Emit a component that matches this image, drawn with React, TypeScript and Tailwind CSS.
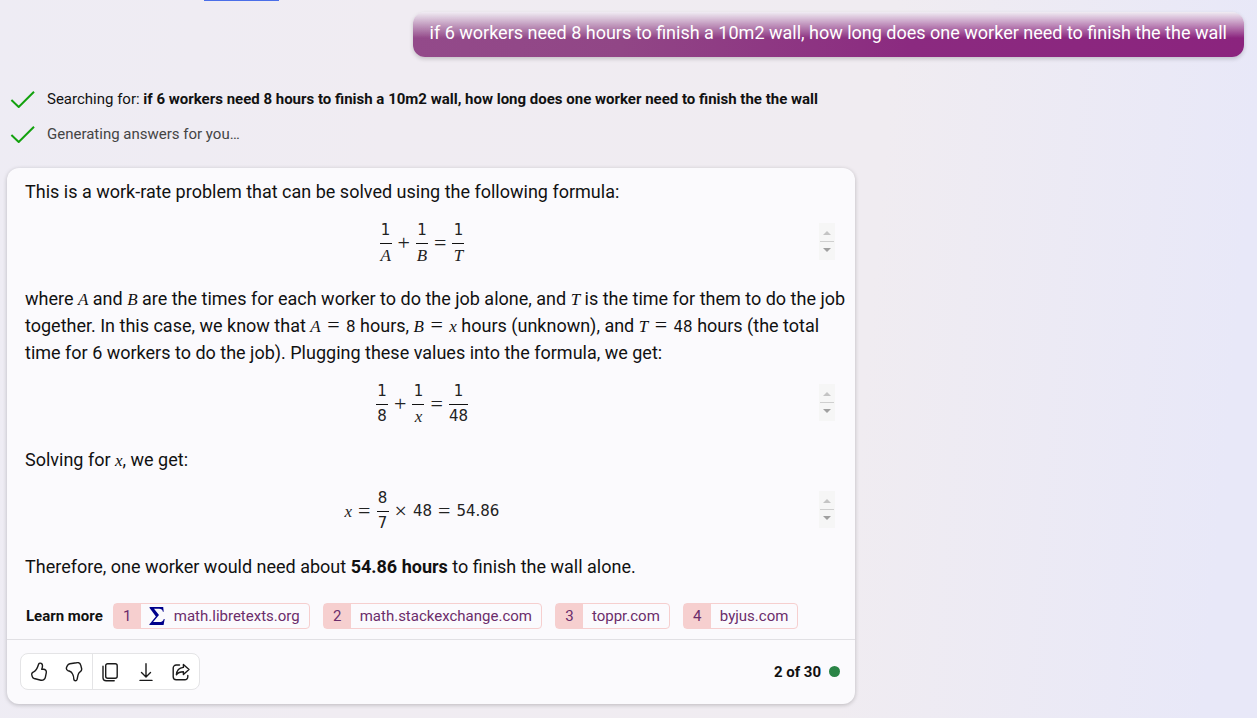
import { useState } from "react"
import type { ReactNode } from "react"

interface Source {
  host: string
  sigma?: boolean
}

const question =
  "if 6 workers need 8 hours to finish a 10m2 wall, how long does one worker need to finish the the wall"

const sources: Source[] = [
  { host: "math.libretexts.org", sigma: true },
  { host: "math.stackexchange.com" },
  { host: "toppr.com" },
  { host: "byjus.com" },
]

function Var({ children }: { children: ReactNode }) {
  return <i className="font-['Liberation_Serif',serif] text-[17px] leading-none">{children}</i>
}

function Num({ children }: { children: ReactNode }) {
  return <span className="font-['DejaVu_Sans',sans-serif] text-[15px] leading-none">{children}</span>
}

function Op({ children }: { children: ReactNode }) {
  return <span className="px-[2px] font-['Liberation_Serif',serif] text-[22px] leading-none">{children}</span>
}

function Frac({ top, bottom }: { top: ReactNode; bottom: ReactNode }) {
  return (
    <span className="inline-flex flex-col items-center">
      <span className="flex h-6 items-center">{top}</span>
      <span className="h-px w-full bg-[#111]" />
      <span className="flex h-6 min-w-3 items-center justify-center">{bottom}</span>
    </span>
  )
}

// Display formula with its small vertical scroller
function Formula({ children }: { children: ReactNode }) {
  return (
    <div className="mt-[18px] mb-[25px] flex h-[37px] items-center">
      <div className="flex flex-1 items-center justify-center gap-1 pt-[3px] text-[#222]">{children}</div>
      <div className="flex h-full w-4 flex-col bg-[#f6f6f6]">
        <button aria-label="Scroll up" className="flex flex-1 items-center justify-center pt-[2px]">
          <svg width="8" height="4" viewBox="0 0 8 4" fill="#c4c4c4">
            <path d="M4 0l4 4H0z" />
          </svg>
        </button>
        <span className="mx-[1px] h-px bg-[#cfcfcf]" />
        <button aria-label="Scroll down" className="flex flex-1 items-center justify-center pb-[2px]">
          <svg width="8" height="4" viewBox="0 0 8 4" fill="#a0a0a0">
            <path d="M4 4L0 0h8z" />
          </svg>
        </button>
      </div>
    </div>
  )
}

function StatusRow({ children }: { children: ReactNode }) {
  return (
    <li className="flex h-[35px] items-center gap-3 pl-[3px]">
      <svg width="25" height="18" viewBox="0 0 25 18" fill="none" stroke="#13a10e" strokeWidth="2">
        <path d="M1.400 10l7.300 7L24 1.700" />
      </svg>
      <p>{children}</p>
    </li>
  )
}

function Icon({ children }: { children: ReactNode }) {
  return (
    <svg
      width="20"
      height="20"
      viewBox="0 0 20 20"
      fill="none"
      stroke="#1a1a1a"
      strokeWidth="1.4"
      strokeLinecap="round"
      strokeLinejoin="round"
    >
      {children}
    </svg>
  )
}

function Toolbar() {
  const [vote, setVote] = useState<"up" | "down" | null>(null)
  const btn = "flex h-full flex-1 items-center justify-center"

  return (
    <div className="flex h-[37px] w-[180px] rounded-lg border border-[#e4e4e6] bg-white">
      <button className={btn} aria-label="Like" aria-pressed={vote === "up"} onClick={() => setVote("up")}>
        <Icon>
          <path d="M10.6 1.2c1.6-.5 2.9.8 2.9 2.6 0 1.2-.3 2.3-.8 3.5h1.8c1.9 0 3.1 1.5 2.8 3.3l-.9 4.6c-.4 2.1-2.4 3.5-4.5 3l-6.7-1.7c-1-.3-1.800-1-2-2.100l-.4-1.500c-.3-1.300.3-2.300 1.500-2.800C6.800 9.200 8.300 6.400 9.600 2.200c.2-.6.5-.9 1-1z" />
        </Icon>
      </button>
      <button
        className={`${btn} border-r border-[#e4e4e6]`}
        aria-label="Dislike"
        aria-pressed={vote === "down"}
        onClick={() => setVote("down")}
      >
        <Icon>
          <path d="M3.400 3.600c.6-1 1.400-1.500 2.500-1.800l6.600-1.100c2-.4 3.800.7 4.300 2.700l.8 3.100c.3 1.400-.2 2.500-1.300 3.200-1.300.9-2 2.100-2.300 3.500l-.9 4.200c-.2.9-.8 1.400-1.600 1.400-1 0-1.600-.7-1.700-1.700 0-1.900-.4-3.500-1.200-5.100-.7-1.500-1.800-2.400-3.400-3L4 8.700c-1.300-.6-1.900-2-1.400-3.400z" />
        </Icon>
      </button>
      <button className={btn} aria-label="Copy">
        <Icon>
          <rect x="4.700" y="1.700" width="11.500" height="14.600" rx="2" />
          <path d="M2 4.300v11.200A3.200 3.200 0 0 0 5.200 18.700h8" />
        </Icon>
      </button>
      <button className={btn} aria-label="Export">
        <Icon>
          <path d="M10 1.800v13M5.500 10.500l4.500 4.400 4.500-4.400M4 18.400h12" />
        </Icon>
      </button>
      <button className={btn} aria-label="Share">
        <Icon>
          <path d="M8.500 3H5.200A3 3 0 0 0 2.200 6v8.800a3 3 0 0 0 3 3h8.600a3 3 0 0 0 3-3v-1.300" />
          <path d="M12.400 2.500l5.600 5-5.600 5V9.800c-3.200 0-5.400.8-7 3 .3-4 2.800-7 7-7.400z" />
        </Icon>
      </button>
    </div>
  )
}

export default function App() {
  return (
    <main className="min-h-screen bg-[linear-gradient(95deg,#eeecf4_0%,#f0ecf2_30%,#f0ecf1_68%,#e8e8f8_96%)] pr-[13px] pb-[14px] pl-[7px] font-[Roboto,sans-serif] text-[#111]">
      <div className="h-3 pl-[197px]">
        <div className="h-px w-[75px] bg-[#4a6ee8]" />
      </div>

      <div className="flex justify-end">
        <p className="rounded-xl bg-[linear-gradient(180deg,#f0ecf3_0%,#f0ecf300_58%),linear-gradient(90deg,#934a8a_0%,#914686_25%,#8b2a80_60%,#8b247e_100%)] px-[17px] pt-[7px] pb-[11px] text-lg leading-[27px] text-white shadow-[0_2px_4px_rgba(0,0,0,0.18)]">
          {question}
        </p>
      </div>

      <ul className="mt-6 text-[15px] leading-5">
        <StatusRow>
          Searching for: <b className="font-bold">{question}</b>
        </StatusRow>
        <StatusRow>
          <span className="text-[#444]">Generating answers for you…</span>
        </StatusRow>
      </ul>

      <article className="mt-[17px] w-full max-w-[848px] rounded-xl bg-[#fbfafd] shadow-[0_1px_4px_rgba(0,0,0,0.22)]">
        <div className="pt-[10px] pr-5 pl-[18px] text-lg leading-[27px]">
          <p>This is a work-rate problem that can be solved using the following formula:</p>
          <Formula>
            <Frac top={<Num>1</Num>} bottom={<Var>A</Var>} />
            <Op>+</Op>
            <Frac top={<Num>1</Num>} bottom={<Var>B</Var>} />
            <Op>=</Op>
            <Frac top={<Num>1</Num>} bottom={<Var>T</Var>} />
          </Formula>
          <p className="-mr-4">
            where <Var>A</Var> and <Var>B</Var> are the times for each worker to do the job alone, and <Var>T</Var> is
            the time for them to do the job together. In this case, we know that <Var>A</Var> <Op>=</Op> <Num>8</Num>{" "}
            hours, <Var>B</Var> <Op>=</Op> <Var>x</Var> hours (unknown), and <Var>T</Var> <Op>=</Op> <Num>48</Num>{" "}
            hours (the total time for 6 workers to do the job). Plugging these values into the formula, we get:
          </p>
          <Formula>
            <Frac top={<Num>1</Num>} bottom={<Num>8</Num>} />
            <Op>+</Op>
            <Frac top={<Num>1</Num>} bottom={<Var>x</Var>} />
            <Op>=</Op>
            <Frac top={<Num>1</Num>} bottom={<Num>48</Num>} />
          </Formula>
          <p>
            Solving for <Var>x</Var>, we get:
          </p>
          <Formula>
            <Var>x</Var>
            <Op>=</Op>
            <Frac top={<Num>8</Num>} bottom={<Num>7</Num>} />
            <Op>×</Op>
            <Num>48</Num>
            <Op>=</Op>
            <Num>54.86</Num>
          </Formula>
          <p>
            Therefore, one worker would need about <b>54.86 hours</b> to finish the wall alone.
          </p>
        </div>

        <div className="mt-[23px] flex flex-wrap items-center gap-[13px] pb-[10px] pl-[19px] text-[15px] leading-6">
          <b className="-mr-[3px]">Learn more</b>
          {sources.map((source, i) => (
            <a
              key={source.host}
              href={`https://${source.host}`}
              className="flex h-[26px] items-center rounded border border-[#f6cfcf] text-[#6b2d6b]"
            >
              <span className="w-[27px] bg-[#f6cfcf] text-center">{i + 1}</span>
              {source.sigma && (
                <svg className="ml-2" width="16" height="18" viewBox="0 0 16 18" fill="#00008b">
                  <path d="M.6 0h13.600l.5 4.800h-.8C13.300 2.500 12.500 1.800 10 1.800H5l5 6.300-5.900 7h6.300c2.500 0 3.600-.9 4.400-3.100h.9L14.600 18H.4v-.8l6.500-7.700L.6 1z" />
                </svg>
              )}
              <span className="px-[9px]">{source.host}</span>
            </a>
          ))}
        </div>

        <footer className="flex items-center justify-between border-t border-[#e1e0e4] px-[13px] pt-[13px] pb-[14px]">
          <Toolbar />
          <div className="flex items-center gap-2 pr-[2px] text-[15px] leading-5 font-bold">
            2 of 30
            <span className="size-[11px] rounded-full bg-[#2a8446]" />
          </div>
        </footer>
      </article>
    </main>
  )
}
